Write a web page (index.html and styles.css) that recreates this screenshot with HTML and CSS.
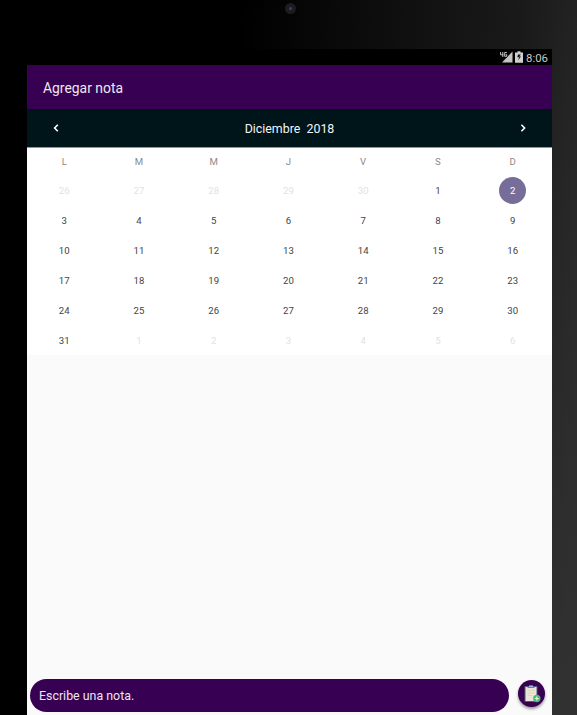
FILE: index.html
```html
<!DOCTYPE html>
<html lang="es">
<head>
<meta charset="utf-8">
<title>Agregar nota</title>
<link rel="stylesheet" href="styles.css">
</head>
<body>
<div class="device">
  <div class="bezel"><span class="camera"><i class="lens"></i></span></div>
  <main class="screen">
    <div class="status">
      <svg class="signal" width="13" height="12" viewBox="0 0 13 12"><path d="M12.500 .5v11H2z" fill="#c4c4c4"/><path d="M0 0h7.500v6.500H0z" fill="#000"/><path d="M2.800 1v5M.6 1v2.800h2.800M6.800 1.500H4.700v3.800h2V3.600H5.700M7.500 6.800v-.8" fill="none" stroke="#c4c4c4" stroke-width="1"/></svg>
      <svg class="battery" width="8" height="12" viewBox="0 0 8 12"><path d="M2.500 .3h3v1.200H8v10.200H0V1.500h2.500z" fill="#d0d0d0"/><path d="M5.900 3.500H3L2.300 6.300h1.900L3 9.600 6 5.500H4.300z" fill="#111"/></svg>
      <span class="clock">8:06</span>
    </div>
    <header class="appbar">Agregar nota</header>
    <div class="month">
      <svg width="10" height="10" viewBox="0 0 10 10"><path d="M6.800 1.700 3.600 5l3.200 3.300" class="chevron"/></svg>
      <span class="month-name">Diciembre&nbsp; 2018</span>
      <svg width="10" height="10" viewBox="0 0 10 10"><path d="M3.400 1.700 6.600 5 3.400 8.300" class="chevron"/></svg>
    </div>
    <section class="calendar">
      <div class="week names"><span>L</span><span>M</span><span>M</span><span>J</span><span>V</span><span>S</span><span>D</span></div>
      <div class="week"><span class="out">26</span><span class="out">27</span><span class="out">28</span><span class="out">29</span><span class="out">30</span><span>1</span><span><b class="today">2</b></span></div>
      <div class="week"><span>3</span><span>4</span><span>5</span><span>6</span><span>7</span><span>8</span><span>9</span></div>
      <div class="week"><span>10</span><span>11</span><span>12</span><span>13</span><span>14</span><span>15</span><span>16</span></div>
      <div class="week"><span>17</span><span>18</span><span>19</span><span>20</span><span>21</span><span>22</span><span>23</span></div>
      <div class="week"><span>24</span><span>25</span><span>26</span><span>27</span><span>28</span><span>29</span><span>30</span></div>
      <div class="week"><span>31</span><span class="out">1</span><span class="out">2</span><span class="out">3</span><span class="out">4</span><span class="out">5</span><span class="out">6</span></div>
    </section>
    <footer class="compose">
      <div class="field">Escribe una nota.</div>
      <div class="add">
        <svg width="18" height="18" viewBox="0 0 18 18"><path d="M1.500 1h13v16h-13z" fill="#4b5b68"/><path d="M2.500 2h11v14h-11z" fill="#ebe5d8"/><path d="M4.500 1h7v1.800h-7z" fill="#5967a5"/><path d="M6 .5h4v1.200H6z" fill="#c9d3e6"/><path d="M4.500 5.500h7M4.500 8h7M4.500 10.500h5" stroke="#d8d1c4" stroke-width=".8"/><circle cx="13.800" cy="13.500" r="3.700" fill="#4fb878"/><path d="M13.800 11.500v4M11.800 13.500h4" stroke="#d8f5df" stroke-width="1.200"/></svg>
      </div>
    </footer>
  </main>
</div>
</body>
</html>
```
FILE: styles.css
```css
* { box-sizing: border-box; }
body { margin: 0; font-family: Roboto, sans-serif; }
.device {
  width: 577px;
  height: 715px;
  padding: 0 25px 0 27px;
  overflow: hidden;
  display: flex;
  flex-direction: column;
  background: linear-gradient(180deg, transparent 0, rgba(54, 54, 54, .6) 100%) right / 25px 100% no-repeat,
    linear-gradient(95deg, #000 38%, #101010 64%, #1a1a1a 82%, #292929 97%);
}
.bezel {
  height: 49px;
  flex: none;
  padding: 3px 0 0 258px;
}
.camera {
  width: 11px;
  height: 11px;
  border-radius: 50%;
  background: #1d1c20;
  display: flex;
  align-items: center;
  justify-content: center;
}
.lens { width: 3px; height: 3px; border-radius: 50%; background: #33427e; }
.screen {
  flex: 1;
  display: flex;
  flex-direction: column;
  background: #fafafa;
}
.status {
  height: 16px;
  background: #000;
  display: flex;
  align-items: center;
  justify-content: flex-end;
  padding-right: 4px;
  color: #c8c8c8;
}
.battery { margin: 0 3px 0 2px; }
.clock { font-size: 11.4px; line-height: 16px; padding-top: 1px; }
.appbar {
  height: 44px;
  background: #380052;
  color: #eee8f0;
  font-size: 13.9px;
  line-height: 46px;
  padding-left: 16px;
}
.month {
  height: 39px;
  background: #00151a;
  border-bottom: 1px solid #8b9999;
  color: #f2f4f4;
  display: flex;
  align-items: center;
  justify-content: space-between;
  padding: 0 24px;
}
.month-name { font-size: 12.4px; line-height: 38px; padding-top: 1px; }
.chevron { fill: none; stroke: #fff; stroke-width: 1.6; }
.calendar {
  height: 207px;
  background: #fff;
  padding-right: 2px;
}
.week {
  display: grid;
  grid-template-columns: repeat(7, 1fr);
  height: 30px;
  font-size: 9.6px;
  color: #444;
}
.week span {
  display: flex;
  align-items: center;
  justify-content: center;
  letter-spacing: .1px;
}
.names { height: 27px; color: #8a8a8a; }
.week .out { color: #e2e2e2; }
.today {
  width: 27px;
  height: 27px;
  border-radius: 50%;
  background: #776d99;
  color: #fff;
  font-weight: 400;
  display: flex;
  align-items: center;
  justify-content: center;
}
.compose {
  margin-top: auto;
  display: flex;
  align-items: flex-start;
  padding: 0 6px 3px 3px;
}
.field {
  width: 479px;
  height: 33px;
  border-radius: 17px;
  background: #380052;
  color: #ece4f0;
  font-size: 12.4px;
  line-height: 33px;
  padding-left: 9px;
}
.add {
  width: 27px;
  height: 27px;
  margin: 1px 0 0 9px;
  border-radius: 50%;
  background: #380052;
  box-shadow: 0 2px 3px rgba(0, 0, 0, .4);
  display: flex;
  align-items: center;
  justify-content: center;
}
```
